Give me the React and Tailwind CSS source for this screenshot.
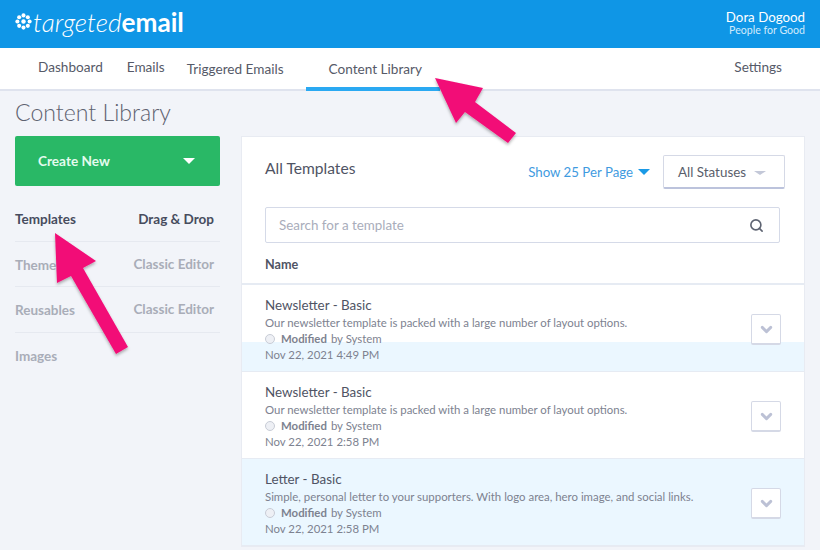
import React from "react";
import { ChevronDown, Search } from "lucide-react";

const templates = [
  { name: "Newsletter - Basic", desc: "Our newsletter template is packed with a large number of layout options.", date: "Nov 22, 2021 4:49 PM", band: true },
  { name: "Newsletter - Basic", desc: "Our newsletter template is packed with a large number of layout options.", date: "Nov 22, 2021 2:58 PM" },
  { name: "Letter - Basic", desc: "Simple, personal letter to your supporters. With logo area, hero image, and social links.", date: "Nov 22, 2021 2:58 PM", active: true },
];

const sideItems = [
  { label: "Templates", right: "Drag & Drop", current: true },
  { label: "Themes", right: "Classic Editor" },
  { label: "Reusables", right: "Classic Editor" },
  { label: "Images" },
];

const Logo = () => (
  <svg width="17" height="17" viewBox="0 0 20 20" fill="#fff">
    <circle cx="10" cy="2.8" r="2.4" />
    <circle cx="15.1" cy="4.9" r="2.4" />
    <circle cx="17.2" cy="10" r="2.4" />
    <circle cx="15.1" cy="15.1" r="2.4" />
    <circle cx="10" cy="17.2" r="2.4" />
    <circle cx="4.9" cy="15.1" r="2.4" />
    <circle cx="2.8" cy="10" r="2.4" />
    <circle cx="4.9" cy="4.9" r="2.4" />
    <circle cx="10" cy="10" r="2.6" />
  </svg>
);

const Caret = ({ className }) => <span className={`inline-block w-0 h-0 border-x-[6px] border-x-transparent border-t-[6px] ${className}`} />;

const TemplateRow = ({ t }) => (
  <div className={`relative h-[87px] border-b border-[#e6ebf3] pl-[23px] pr-[23px] flex items-start justify-between ${t.active ? "bg-[#ebf7ff]" : "bg-white"}`}>
    {t.band && <div className="absolute left-0 right-0 bottom-0 h-[29px] bg-[#ebf7ff]" />}
    <div className="relative pt-[11px]">
      <div className="text-[13.4px] leading-[18px] text-[#4f5464]">{t.name}</div>
      <div className="text-[11.4px] leading-[16px] text-[#7d8290] mt-[1px]">{t.desc}</div>
      <div className="flex items-center text-[11.4px] leading-[16px] text-[#7d8290]">
        <span className="w-[10px] h-[10px] rounded-full bg-[#eef0f5] border border-[#c8ccd6] mr-[6px]" />
        <span className="font-bold mr-1">Modified</span> by System
      </div>
      <div className="text-[11.4px] leading-[15px] text-[#7d8290]">{t.date}</div>
    </div>
    <div className="relative mt-[29px] w-[30px] h-[31px] bg-white border border-[#d5d9e6] border-b-2 rounded-[2px] flex items-center justify-center">
      <ChevronDown size={17} strokeWidth={4} className="text-[#bcc1d5]" />
    </div>
  </div>
);

export default function App() {
  return (
    <div className="relative w-[820px] h-[550px] overflow-hidden bg-[#f2f4f9] font-['Lato',sans-serif]">
      {/* Header */}
      <div className="h-[48px] bg-[#0f96e6] flex items-center justify-between pl-[15px] pr-[15px]">
        <div className="flex items-center gap-[1px] -mt-[4px] text-white text-[26.2px] leading-none">
          <Logo />
          <span className="italic font-light">targeted</span>
          <span className="font-bold -ml-[1px]">email</span>
        </div>
        <div className="text-right -mt-[3px]">
          <div className="text-[13.3px] leading-[14px] text-white">Dora Dogood</div>
          <div className="text-[10.6px] leading-[12px] text-[#cfeafc]">People for Good</div>
        </div>
      </div>
      {/* Nav */}
      <div className="h-[43px] bg-white border-b-2 border-[#dfe3ee] flex text-[13.6px] text-[#565a68]">
        <div className="ml-[38px] pt-[9px]">Dashboard</div>
        <div className="ml-[24px] pt-[9px]">Emails</div>
        <div className="ml-[22px] pt-[11px]">Triggered Emails</div>
        <div className="ml-[22px] w-[134px] h-[43px] pt-[11px] pl-[23px] border-b-[4px] border-[#2aa9f2]">Content Library</div>
        <div className="ml-auto mr-[38px] pt-[9px]">Settings</div>
      </div>
      <div className="px-[15px] pt-[6px] text-[23.1px] leading-[30px] font-light text-[#5e6270]">Content Library</div>
      <div className="flex pl-[15px] pr-[15px] pt-[9px]">
        {/* Sidebar */}
        <div className="w-[205px] shrink-0">
          <div className="h-[50px] bg-[#29b866] rounded-[2px] flex items-center justify-between pl-[23px] pr-[25px] text-[13.6px] font-bold text-[#e4fbee]">
            <span>Create New</span>
            <Caret className="border-t-white" />
          </div>
          <div className="mt-[10px]">
            {sideItems.map((item) => (
              <div key={item.label} className={`h-[45.5px] pt-[14px] flex justify-between pr-[6px] text-[13.5px] leading-[18px] font-bold last:border-b-0 border-b border-[#e6e9f0] ${item.current ? "text-[#474c5e]" : "text-[#a9adb8]"}`}>
                <span>{item.label}</span>
                {item.right && <span className={item.current ? "" : "-mt-[1px]"}>{item.right}</span>}
              </div>
            ))}
          </div>
        </div>
        {/* Card */}
        <div className="ml-[21px] w-[564px] bg-white border border-[#e8ebf2]">
          <div className="relative h-[148px] border-b-2 border-[#e6ebf3] pl-[23px] pr-[24px]">
            <div className="flex items-start justify-between pt-[18px]">
              <div className="pt-[1px] text-[15.6px] leading-[24px] text-[#4f5464]">All Templates</div>
              <div className="flex items-start -mr-[5px]">
                <div className="flex items-center gap-[5px] pt-[8px] text-[13.25px] leading-[18px] text-[#3f9bdf]">
                  Show 25 Per Page
                  <Caret className="border-t-[#1a9ae6]" />
                </div>
                <div className="ml-[13px] w-[122px] h-[34px] pt-[1px] bg-white border border-[#d5d9e6] border-b-2 border-b-[#bcc3dc] rounded-[2px] flex items-center pl-[14px] gap-[8px] text-[13.4px] text-[#5a5e6b]">
                  All Statuses
                  <span className="inline-block w-0 h-0 border-x-[6px] border-x-transparent border-t-[4px] border-t-[#c3c8d8] mt-[2px]" />
                </div>
              </div>
            </div>
            <div className="mt-[18px] h-[36px] pt-[1px] border border-[#d5dae8] rounded-[2px] flex items-center justify-between pl-[13px] pr-[15px] text-[13.4px] text-[#a9adbb]">
              Search for a template
              <Search size={15} strokeWidth={2.6} className="text-[#5e6472]" />
            </div>
            <div className="mt-[13px] text-[12.6px] leading-[18px] font-bold text-[#4f5464]">Name</div>
          </div>
          {templates.map((t, i) => (
            <TemplateRow key={i} t={t} />
          ))}
        </div>
      </div>
      {/* Pink annotation arrows */}
      <svg className="absolute inset-0 pointer-events-none" width="820" height="550">
        <defs>
          <filter id="arrowShadow" x="-20%" y="-20%" width="140%" height="140%">
            <feDropShadow dx="0" dy="2" stdDeviation="1.5" floodColor="#000" floodOpacity="0.3" />
          </filter>
        </defs>
        <polygon filter="url(#arrowShadow)" fill="#f20d77" points="435,78 483,88 475,102 516,133 508,143 465,112 456,123" />
        <polygon filter="url(#arrowShadow)" fill="#f20d77" points="55,233 96,261 83,268 128,347 116,354 71,276 57,283" />
      </svg>
    </div>
  );
}
